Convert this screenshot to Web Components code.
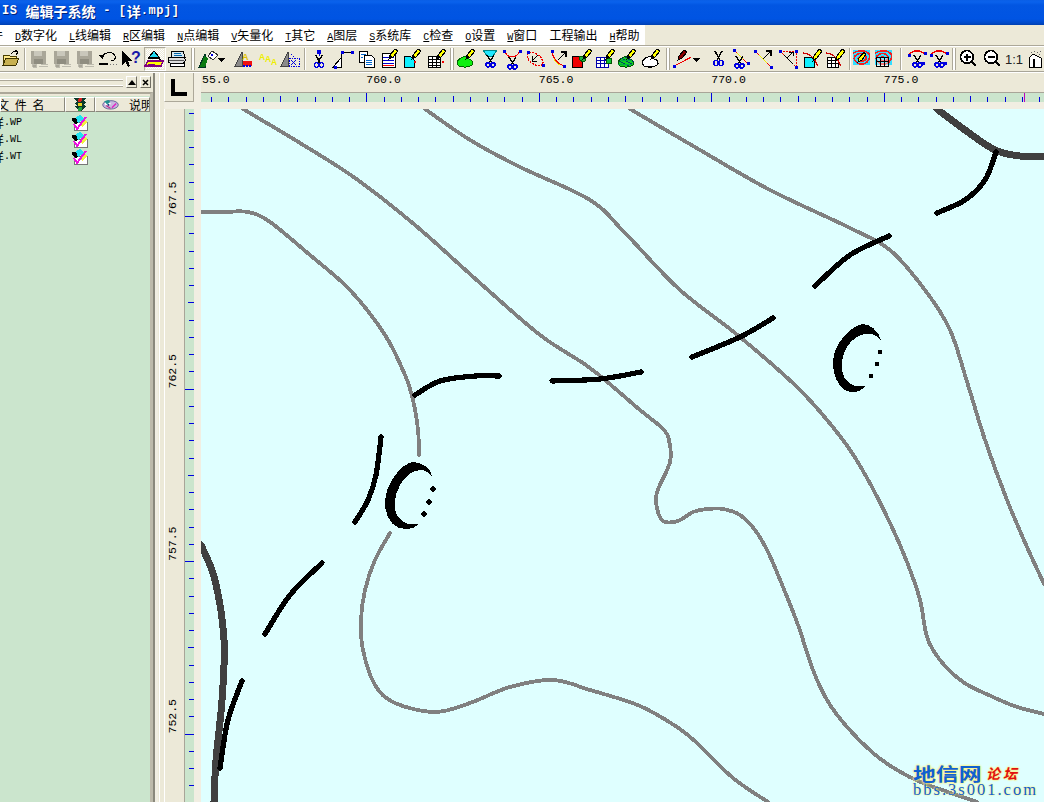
<!DOCTYPE html>
<html lang="zh"><head><meta charset="utf-8"><title>MAPGIS</title>
<style>
html,body{margin:0;padding:0;width:1044px;height:802px;overflow:hidden;background:#ece9d8}
body{display:flex;flex-direction:column;font-family:"Noto Sans CJK SC","Liberation Sans",sans-serif}
#work{display:flex;flex:1;min-height:0}
</style></head><body>
<gis-titlebar>IS 编辑子系统 - [详.mpj]</gis-titlebar>
<gis-menubar></gis-menubar>
<gis-toolbar></gis-toolbar>
<div id="work">
  <gis-panel></gis-panel>
  <gis-splitter></gis-splitter>
  <gis-mapview></gis-mapview>
</div>
<script>
const CJK='"Noto Sans CJK SC",sans-serif', MONO='"Liberation Mono",monospace';
function def(name,css,html,init){
  customElements.define(name,class extends HTMLElement{
    constructor(){super();const r=this.attachShadow({mode:'open'});
      r.innerHTML='<style>'+css+'</style>'+(typeof html==='function'?html(this):html);}
    connectedCallback(){if(init)init(this.shadowRoot,this);}
  });
}
/* ---------- title bar ---------- */
def('gis-titlebar',`
:host{display:flex;align-items:center;flex:none;height:25px;box-sizing:border-box;padding:0 0 3px 2px;overflow:hidden;
 background:linear-gradient(#0a5fe6 0,#0a62ec 2px,#0256e2 5px,#0054e3 19px,#0049c8 23px,#003fb0 25px);color:#fff;
 font:bold 12px ${MONO};white-space:pre;text-shadow:1px 1px 0 #00207a}
.l{letter-spacing:.6px}
.c{font:bold 14px ${CJK}}`,
`<span class="l">IS </span><span class="c">编辑子系统</span><span class="l"> - [</span><span class="c">详</span><span class="l">.mpj]</span>`);
/* ---------- menu ---------- */
const menus=[['F','文件'],['D','数字化'],['L','线编辑'],['R','区编辑'],['N','点编辑'],['V','矢量化'],['T','其它'],['A','图层'],['S','系统库'],['C','检查'],['O','设置'],['W','窗口'],['','工程输出'],['H','帮助']];
def('gis-menubar',`
:host{display:flex;flex:none;height:20px;background:#ece9d8;border-bottom:1px solid #aca899;box-sizing:content-box;overflow:hidden}
.w{display:flex;width:645px;flex:none;background:#fff;height:20px;align-items:center;color:#000;overflow:hidden}
.i{flex:none;padding:0 6px;font:12px/20px ${CJK};white-space:nowrap}
.i u{font:10px ${MONO};text-decoration:underline}
.first{margin-left:-33px}`,
`<div class="w">`+menus.map((m,i)=>`<span class="i${i?'':' first'}">${m[0]?`<u>${m[0]}</u>`:''}${m[1]}</span>`).join('')+`</div>`);
/* ---------- icons ---------- */
const B='#0000e0',R='#f00000';
const sc=(x,y,c='#000')=>`<g transform="translate(${x} ${y})" fill="none"><path d="M2 0L7 8M9 0L4 8" stroke="${c}" stroke-width="1.4"/><circle cx="3" cy="10" r="2.2" stroke="${B}" stroke-width="1.3"/><circle cx="8" cy="10" r="2.2" stroke="${B}" stroke-width="1.3"/></g>`;
const pen=(x,y)=>`<g transform="translate(${x} ${y})"><path d="M0 10L1 6 6 0 9 2 4 8Z" fill="#ff0" stroke="#000"/><path d="M0 10L1 6 3 8Z" fill="#000"/></g>`;
const dot=(x,y,c=B,s=3)=>`<rect x="${x-s/2}" y="${y-s/2}" width="${s}" height="${s}" fill="${c}"/>`;
const gtri=`<path d="M8 3L8 17 1 17Z" fill="#8a8a8a" stroke="#444"/>`;
const save=`<path d="M3 2h15v13H3z" fill="#a9a698"/><rect x="6" y="2" width="8" height="5" fill="#c9c7bb"/><rect x="6" y="10" width="9" height="5" fill="#8f8d80"/><path d="M8 15h-4l1 3h3zM11 17h9M13 15h7" stroke="#bdbbae" stroke-width="1" fill="#a9a698"/>`;
const arrowTR=(x,y)=>`<path d="M${x} ${y+8}L${x+8} ${y}M${x+3} ${y}h5v5" fill="none" stroke="#000" stroke-width="1.3"/>`;
const contour=`<rect x="1" y="1" width="17" height="15" fill="#3df" /><path d="M1 4C6 1 14 1 17 5 19 11 14 16 8 15 3 14 1 10 3 7 6 3 13 4 14 8 15 12 10 13 7 11 5 9 7 7 10 8" fill="none" stroke="#f02020" stroke-width="1.5"/>`;
const zoom=(p)=>`<circle cx="9" cy="8" r="6.4" fill="#fff" stroke="#000" stroke-width="1.6"/><path d="M13.5 12.5L18 17" stroke="#000" stroke-width="2.6"/><path d="M5.5 8h7${p?'M9 4.5v7':''}" stroke="#000" stroke-width="1.8"/>`;
const icons={
 folder:`<path d="M3 16V6h6l1 1h6v3" fill="#ffe98a" stroke="#4b4000"/><path d="M3 16L6 9H19L16 16Z" fill="#c7b050" stroke="#3c3300"/><path d="M11 5C12 3 15 2 17 3M15 1l3 2-2 3" fill="none" stroke="#000"/>`,
 save,
 undo:`<path d="M5 8C7 3 16 2 18 7 19 10 17 12 14 12" fill="none" stroke="#000"/><path d="M2 6l5 0-1 5z" fill="#000"/><path d="M2 15h9" stroke="#000" stroke-width="2"/><path d="M13 15h1M16 15h1M19 15h1" stroke="#777"/>`,
 help:`<path d="M1 2V16L4.500 12.500 7 18 9 17 7 11.500H11Z" fill="#000"/><text x="10" y="14" font-family="Liberation Sans" font-weight="bold" font-size="16" fill="#1818a8">?</text>`,
 map:`<path d="M10 2L15 8H5Z" fill="#20d8f0" stroke="#000"/><path d="M4 9h11l2 3" fill="#fff" stroke="#000"/><path d="M4 12H19L17 17H1Z" fill="#ff0" stroke="#800080" stroke-width="1.5"/><path d="M4 15h7" stroke="#800080"/>`,
 print:`<path d="M6 2H17L19 8H5Z" fill="#d8e8f0" stroke="#000"/><path d="M8 4h7M8 6h8" stroke="#06a" /><rect x="2" y="8" width="17" height="6" rx="2" fill="#ddd" stroke="#000"/><path d="M3 11h15" stroke="#555"/><rect x="4" y="14" width="14" height="3" fill="#fff" stroke="#000"/>`,
 pt:`<path d="M7 5L7 18 1 18Z" fill="#0a7a10" stroke="#032"/><path d="M8 7L4 15 7 18 10 10Z" fill="#0a7a10"/><path d="M14 2L20 6 15 11 10 7Z" fill="#fff" stroke="#333"/>${dot(14,6,B,2)}`,
 down:`<path d="M2 9h7l-3.500 4z" fill="#000"/>`,
 pta:gtri+`<text x="8" y="11" font-family="Liberation Sans" font-weight="bold" font-size="9" fill="#e0c000">A</text><rect x="9" y="12" width="9" height="5" fill="#f01010"/><path d="M9 17h9" stroke="${B}" stroke-width="2" stroke-dasharray="2 1"/>`,
 aaa:`<text x="1" y="11" font-family="Liberation Sans" font-weight="bold" font-size="8.500" fill="#eeee00">A</text><text x="7" y="13" font-family="Liberation Sans" font-weight="bold" font-size="8.500" fill="#eeee00">A</text><text x="13" y="16" font-family="Liberation Sans" font-weight="bold" font-size="8.500" fill="#eeee00">A</text>`,
 ptb:gtri+`<path d="M11 5l3 3M9 9h10v8H9z" fill="none" stroke="${B}" stroke-dasharray="1.500 1"/><path d="M11 11l5 5M16 11l-5 5" stroke="${B}"/>`,
 cut1:dot(11,3,B,3.500)+`<path d="M11 4v3" stroke="${B}"/>`+sc(5.500,6),
 line:`<path d="M9 18L9 9 1 18Z" fill="#fff" stroke="#000"/><path d="M9 9L10 3H20" fill="none" stroke="#000"/>${dot(10,3)}${dot(20,3)}${dot(3,18)}`,
 doc2:`<path d="M3 2h8v11H3z" fill="#fff" stroke="#000"/><path d="M8 6h7l3 3v9H8z" fill="#fff" stroke="#000"/><path d="M5 5h5M5 8h2M10 11h6M10 13h6M10 15h6" stroke="#06c"/>`,
 lines:`<path d="M3 4h13v14H3z" fill="#fff" stroke="#000"/><path d="M4 8h11M4 11h11M4 14h11" stroke="#00c"/><path d="M4 16h11" stroke="#f00"/>`+pen(10,0),
 docpen:`<path d="M3 7h6l4 4v7H3z" fill="#10f0ff" stroke="#000"/>`+pen(11,0)+dot(14,13,R,2),
 tbl:`<path d="M3 7h12v11H3z" fill="#fff" stroke="#000"/><path d="M3 10h12M3 13h12M3 16h12M7 7v11M11 7v11" stroke="#000"/>`+pen(12,0)+dot(18,13,R,2),
 blobg:`<path d="M3 17C-1 13 3 9 7 8 10 6 13 8 13 10 17 11 18 14 16 16 12 19 6 18 3 17Z" fill="#10f010" stroke="#060"/>`+pen(10,0),
 cutc:`<path d="M3 1H17L13 7H7Z" fill="#20e8ff" stroke="#088"/>`+sc(5,6),
 cutr:`<path d="M2 2C5 7 8 8 10 8 13 8 16 6 18 2" fill="none" stroke="${R}"/>${dot(2,2)}${dot(18,2)}`+sc(5,8),
 ell:`<ellipse cx="9" cy="10" rx="9" ry="5" transform="rotate(35 9 10)" fill="none" stroke="${R}" stroke-dasharray="2 1" stroke-width="1.300"/>${dot(2,3)}${dot(17,16)}<path d="M12 6L6 12M6 7v5h5" fill="none" stroke="#000"/>`,
 crv:`<path d="M3 2C4 10 9 15 15 17" fill="none" stroke="${R}" stroke-width="1.200"/><path d="M5 10C6 13 9 15 11 16" stroke="#ee0" fill="none"/>${dot(3,2)}${dot(15,17)}`+arrowTR(9,3),
 rg:`<rect x="1" y="7" width="10" height="11" fill="#f00000" stroke="#000"/><path d="M8 8C11 6 15 8 15 11 13 14 9 13 8 8Z" fill="#20b040" stroke="#050"/>`+pen(12,0),
 grid:`<path d="M2 8h12v10H2z" fill="#fff" stroke="#00a"/><path d="M2 11h12M2 14h12M6 8v10M10 8v10" stroke="#00a"/><circle cx="15" cy="12" r="3" fill="#10c030" stroke="#050"/>`+pen(12,0),
 hatch:`<path d="M3 17C-1 13 3 9 7 8 10 6 13 8 13 10 17 11 18 14 16 16 12 19 6 18 3 17Z" fill="#10d020" stroke="#050"/><path d="M2 12L12 17M4 9L15 15M8 8L17 13" stroke="#046" /><path d="M1 15h14M4 11h11" stroke="#0a4"/>`+pen(10,0),
 bloww:`<path d="M3 17C-1 13 3 9 7 8 10 6 13 8 13 10 17 11 18 14 16 16 12 19 6 18 3 17Z" fill="#fff" stroke="#000" stroke-width="1.200"/>`+pen(10,0),
 redpen:`<path d="M1 17C5 15 10 13 18 8" fill="none" stroke="${R}" stroke-width="1.200"/>${dot(1,17)}`+`<g transform="translate(5 1)"><path d="M0 10L1 6 6 0 9 2 4 8Z" fill="#800" stroke="#000"/></g>`,
 cut:sc(5,1,'#000').replace('translate(5 1)','translate(5 2) scale(1 1.200)'),
 cuty:`<path d="M3 1L16 14" stroke="${R}"/><path d="M6 4l6 6" stroke="#ee0"/>${dot(3,1)}${dot(17,14)}`+sc(3,7),
 diag:`<path d="M1 2L17 18" stroke="${R}"/><path d="M5 6l8 8" stroke="#ee0"/>${dot(1,2)}${dot(17,18)}`+arrowTR(9,2),
 tri:`<path d="M1 2H17V18Z" fill="none" stroke="${R}" stroke-dasharray="2 1"/>${dot(1,2)}${dot(17,2)}${dot(17,18)}<path d="M5 6L14 15" stroke="#000"/><path d="M8 9L14 3M10 3h4v4" fill="none" stroke="#000"/>`,
 dcr:`<path d="M2 8h7l3 3v7H2z" fill="#10f0ff" stroke="#000"/><path d="M1 4C6 4 12 8 16 17" fill="none" stroke="#c00" stroke-width="1.200"/>`+`<g transform="translate(11 0)"><path d="M0 12L1 7 6 0 9 2 4 9Z" fill="#ff0" stroke="#000"/></g>`,
 tcr:`<path d="M2 8h11v10H2z" fill="#fff" stroke="#000"/><path d="M2 11h11M2 14h11M6 8v10M10 8v10" stroke="#000"/><path d="M1 4C6 4 12 8 16 17" fill="none" stroke="#c00" stroke-width="1.200"/>`+`<g transform="translate(11 0)"><path d="M0 12L1 7 6 0 9 2 4 9Z" fill="#ff0" stroke="#000"/></g>`,
 ctp:contour+`<g transform="translate(6 3)"><path d="M0 10L1 6 6 0 8 2 4 8Z" fill="#ff0" stroke="#000"/></g><circle cx="12" cy="4" r="1.500" fill="#000"/>`,
 ctg:contour+`<path d="M2 8h12v9H2z" fill="#fff" fill-opacity=".4" stroke="#000"/><path d="M2 12h12M6 8v9M10 8v9" stroke="#000"/>`,
 cutd:`<path d="M3 5L8 2H14L19 5" fill="none" stroke="${R}" stroke-width="1.200"/>${dot(3,6)}${dot(19,4)}`+sc(6,6)+dot(17,14),
 zin:zoom(1),zout:zoom(0),
 one:`<text x="0" y="15" font-family="Liberation Sans" font-size="13" fill="#222">1:1</text>`,
 bld:`<path d="M6 5L2 9V18H14V9Z" fill="#fff" stroke="#000"/><path d="M7 18V10" stroke="#000" stroke-width="2"/><path d="M4 3h1M7 2h1M10 3h1M13 2h1M12 5h1" stroke="#666" stroke-width="1"/>`
};
const tb=[['folder',22],['|',6],['save',22],['save',23],['save',23],['undo',24],['help',24],['map',22,1],['print',22],['||',10],['pt',22],['down',14],['pta',22],['-',2],['aaa',22],['ptb',22],['|',6],['cut1',22],['-',2],['line',22],['-',2],['doc2',22],['-',1],['lines',22],['docpen',22],['-',2],['tbl',22],['||',9],['blobg',22],['-',2],['cutc',22],['cutr',22],['-',2],['ell',22],['-',1],['crv',22],['rg',22],['-',1],['grid',22],['-',1],['hatch',22],['-',2],['bloww',22],['||',10],['redpen',22],['down',13],['cut',22],['-',1],['cuty',22],['-',1],['diag',22],['-',3],['tri',22],['-',1],['dcr',22],['-',1],['tcr',22],['|',5],['ctp',22],['ctg',22],['|',10],['cutd',22],['cutd',22],['||',8],['zin',22],['-',2],['zout',22],['-',1],['one',22],['bld',22]];
def('gis-tb-item',`
:host{display:flex;flex:none;align-items:center;justify-content:center;height:24px;box-sizing:border-box;overflow:visible}
:host([pressed]){background:repeating-conic-gradient(#fff 0 25%,#ece9d8 0 50%) 0 0/2px 2px;border:1px solid;border-color:#aca899 #fff #fff #aca899;box-shadow:inset 0 0 0 1px #ece9d8}
svg{width:22px;height:20px;flex:none;overflow:visible}
.s{width:0;height:22px;border-left:1px solid #aca899;border-right:1px solid #fff}
.d{width:2px;height:22px;border-left:1px solid #aca899;border-right:1px solid #aca899;background:#fff}`,'');
def('gis-toolbar',`
:host{display:flex;flex:none;height:24px;background:#ece9d8;overflow:hidden;align-items:center;border-top:1px solid #fff;border-bottom:1px solid #a8a598;box-shadow:0 1px 0 #fff;position:relative;box-sizing:content-box}`,
'',(r)=>{
 tb.forEach(([k,w,p])=>{
  const el=document.createElement('gis-tb-item');el.style.width=w+'px';
  if(p)el.setAttribute('pressed','');
  const s=el.shadowRoot;
  if(k==='|')s.innerHTML+='<div class="s"></div>';
  else if(k==='||')s.innerHTML+='<div class="d"></div>';
  else if(k!=='-')s.innerHTML+=`<svg viewBox="0 0 22 20" shape-rendering="${/one|aaa/.test(k)?'auto':'crispEdges'}">${icons[k]}</svg>`;
  r.appendChild(el);
 });
});
/* ---------- left panel ---------- */
const light=`<svg width="18" height="15" viewBox="0 0 18 15" shape-rendering="crispEdges"><path d="M3 1h12l-3 3 3 1-3 3 3 1-3 3-3 3-3-3-3-3 0 0 3 0-3-3 3-1z" fill="#0b3a2a"/><circle cx="9" cy="3" r="2" fill="#d02020"/><circle cx="9" cy="7.500" r="2" fill="#e8d020"/><circle cx="9" cy="12" r="2" fill="#20a040"/></svg>`;
const disc=`<svg width="17" height="13" viewBox="0 0 24 15" style="flex:none"><ellipse cx="12" cy="8" rx="11" ry="6" fill="#c8b8e0" stroke="#404080"/><ellipse cx="8" cy="6" rx="4" ry="3" fill="#fff"/><path d="M3 3L9 1 12 4 7 7Z" fill="#209090"/><path d="M14 12l6-6" stroke="#e020c0" stroke-width="2"/><path d="M6 9l6 4" stroke="#c02080" stroke-width="1.500"/><circle cx="9" cy="8" r="1.500" fill="#204080"/></svg>`;
const chk=`<svg width="16" height="16" viewBox="0 0 16 16" shape-rendering="crispEdges"><rect x="2" y="7" width="13" height="8.500" fill="#fff" stroke="#777"/><path d="M0 3h5l3 3-4 3-4-3z" fill="#000"/><path d="M4 2L8 0l4 4-6 4z" fill="#20e0f0"/><path d="M7 9l5-5 3 3-5 5z" fill="#f0f040"/><path d="M2 9l3 5 9-12" fill="none" stroke="#f010e0" stroke-width="2"/><path d="M5 16h9" stroke="#111" stroke-width="1"/></svg>`;
def('gis-panel',`
:host{display:flex;flex-direction:column;flex:none;width:153px;background:#ece9d8;overflow:hidden;font:12px ${CJK};color:#000}
.grip{display:flex;align-items:center;height:20px;flex:none;gap:3px;padding-right:2px;box-sizing:border-box}
.lines{flex:1;height:5px;border:solid #fff;border-width:1px 0;box-shadow:0 1px 0 #aca899,inset 0 1px 0 #aca899;background:#ece9d8}
.b{width:11px;height:12px;box-sizing:border-box;border:1px solid;border-color:#fff #716f64 #716f64 #fff;display:flex;align-items:center;justify-content:center;background:#ece9d8;flex:none}
.list{flex:1;display:flex;flex-direction:column;min-height:0;border-right:3px solid #bdbaab;border-top:2px solid #aca899;padding-top:3px;background:linear-gradient(#ece9d8 0 2px,#cbe5cd 2px)}
.hd{display:flex;height:15px;flex:none;background:#ece9d8;overflow:hidden}
.hd>div{box-sizing:border-box;border:1px solid;border-color:#fff #8a887c #8a887c #fff;display:flex;align-items:center;justify-content:center;height:15px;line-height:13px;white-space:pre;overflow:hidden;flex:none}
.r{display:flex;height:17px;align-items:center;flex:none;font:10px ${MONO};white-space:nowrap;position:relative}
.t{width:80px;flex:none;margin-left:-8px;display:flex;align-items:center}.t b{font:12px ${CJK};display:inline-block;width:12px}
.rows{padding-top:2px;background:#cbe5cd;flex:1;overflow:hidden}`,
`<div class="grip"><div class="lines"></div>
 <div class="b"><svg width="8" height="5" viewBox="0 0 8 5"><path d="M4 0L8 5H0z" fill="#000"/></svg></div>
 <div class="b"><svg width="7" height="7" viewBox="0 0 7 7"><path d="M1 1l5 5M6 1l-5 5" stroke="#000" stroke-width="1.500"/></svg></div></div>
<div class="list"><div class="hd">
 <div style="width:65px;justify-content:flex-start"><span style="margin-left:-4px;letter-spacing:1.500px">文 件 名</span></div>
 <div style="width:30px">${light}</div>
 <div style="width:55px;justify-content:flex-start;padding-left:6px;gap:10px">${disc}<span style="flex:none">说明</span></div></div>
 <div class="rows">${['WP','WL','WT'].map(x=>`<div class="r"><div class="t"><b>详</b>.${x}</div>${chk}</div>`).join('')}</div></div>`);
def('gis-splitter',`:host{display:block;flex:none;width:11px;background:linear-gradient(90deg,#8a887c 0 2px,#f1eee2 2px 5.500px,#ece9d8 5.500px 6px,#fff 6px 7px,#ece9d8 7px 11px)}`,'');
/* ---------- rulers ---------- */
const P=17.25;
def('gis-corner',`:host{display:block;background:#f1eee2;width:37px;height:37px;flex:none}
.b{width:30px;height:30px;box-sizing:border-box;background:#ece9d8;border:1px solid;border-color:#fff #aca899 #aca899 #fff;display:flex;align-items:center;justify-content:center}`,
`<div class="b"><svg width="16" height="17" viewBox="0 0 16 17"><path d="M0 0h4v13h12v4H0z" fill="#000"/></svg></div>`);
function rulerSvg(){
 const W=843,H=37,ox=201;let s='';
 s+=`<rect width="${W}" height="20" fill="#ece9d8"/><rect y="20" width="${W}" height="1" fill="#a8a598"/><rect y="21" width="${W}" height="9" fill="#cbe5cd"/><rect y="30" width="${W}" height="7" fill="#f1eee2"/>`;
 for(let k=-10;k<60;k++){const x=Math.round(366.3+k*P-ox);if(x<0||x>W)continue;const m=((k%10)+10)%10===0,n=((k%5)+5)%5===0;
  s+=`<rect x="${x}" y="${m?21:n?24:25}" width="1" height="${m?9:n?6:5}" fill="#0000e0"/>`;}
 s+=`<rect x="${1024-ox}" y="21" width="1" height="9" fill="#c000c0"/>`;
 [['55.0',202],['760.0',366.3],['765.0',538.8],['770.0',711.3],['775.0',883.8]].forEach(([t,x])=>{s+=`<text x="${x-ox}" y="11" font-family="Liberation Mono" font-size="11.500" fill="#000">${t}</text>`;});
 return `<svg width="${W}" height="${H}" viewBox="0 0 ${W} ${H}" shape-rendering="crispEdges" style="display:block">${s}</svg>`;
}
function vrulerSvg(){
 const W=37,H=693,oy=109;let s='';
 s+=`<rect width="20" height="${H}" fill="#ece9d8"/><rect width="1" height="${H}" fill="#fff"/><rect x="20" width="1" height="${H}" fill="#a8a598"/><rect x="21" width="9" height="${H}" fill="#cbe5cd"/><rect x="30" width="7" height="${H}" fill="#f1eee2"/>`;
 for(let k=-10;k<60;k++){const y=Math.round(216+k*P-oy);if(y<0||y>H)continue;const m=((k%10)+10)%10===0,n=((k%5)+5)%5===0;
  s+=`<rect x="${m?21:n?24:25}" y="${y}" width="${m?9:n?6:5}" height="1" fill="#0000e0"/>`;}
 [['767.5',216],['762.5',388.5],['757.5',561],['752.5',733.5]].forEach(([t,y])=>{s+=`<text transform="translate(12 ${y-oy}) rotate(-90)" font-family="Liberation Mono" font-size="11.500" fill="#000">${t}</text>`;});
 return `<svg width="${W}" height="${H}" viewBox="0 0 ${W} ${H}" shape-rendering="crispEdges" style="display:block">${s}</svg>`;
}
def('gis-hruler',`:host{display:block;flex:1;overflow:hidden;height:37px}`,rulerSvg());
def('gis-vruler',`:host{display:block;flex:none;width:37px;overflow:hidden}`,vrulerSvg());
/* ---------- map ---------- */
function sm(pts){let d=`M${pts[0][0]} ${pts[0][1]}`;
 for(let i=0;i<pts.length-1;i++){const p0=pts[i-1]||pts[i],p1=pts[i],p2=pts[i+1],p3=pts[i+2]||p2;
  d+=`C${(p1[0]+(p2[0]-p0[0])/6).toFixed(1)} ${(p1[1]+(p2[1]-p0[1])/6).toFixed(1)} ${(p2[0]-(p3[0]-p1[0])/6).toFixed(1)} ${(p2[1]-(p3[1]-p1[1])/6).toFixed(1)} ${p2[0]} ${p2[1]}`;}
 return d;}
const gray=[
 [[243,109],[300,143],[355,178],[415,225],[480,283],[540,335],[590,368],[640,410],[662,428],[669,440],[670,462],[657,492],[657,508],[663,521],[678,521],[693,512],[708,509],[723,509],[740,515],[755,530],[768,552],[783,587],[798,625],[813,670],[827,700],[847,727],[873,753],[897,770],[923,783],[977,802]],
 [[201,212],[225,212],[248,212],[270,222],[310,255],[350,290],[385,335],[405,375],[413,400],[418,430],[419,455]],
 [[390,533],[375,560],[365,590],[361,620],[363,650],[375,685],[395,703],[435,712],[470,703],[510,687],[553,680],[590,690],[640,706],[677,727],[697,743],[733,778],[768,802]],
 [[425,109],[470,140],[520,167],[590,200],[625,233],[680,290],[740,337],[800,390],[843,440],[867,478],[890,523],[907,562],[920,600],[927,637],[940,660],[963,682],[993,697],[1017,707],[1044,714]],
 [[630,109],[700,150],[770,190],[850,228],[890,250],[925,290],[950,330],[968,385],[985,440],[1007,500],[1027,547],[1044,584]]
];
const dark=[[[937,109],[965,130],[995,150],[1020,156],[1044,156]],[[201,545],[215,580],[224,640],[222,700],[216,760],[214,802]]];
const blk=[[[937,213],[965,200],[985,180],[996,152]],[[815,286],[850,255],[889,236]],[[692,357],[740,337],[773,318]],[[552,381],[600,379],[641,372]],[[415,395],[440,381],[475,376],[499,376]],[[381,437],[376,475],[368,500],[355,522]],[[322,563],[290,595],[265,634]],[[242,681],[228,720],[220,768]]];
const mapSvg=`<svg width="843" height="693" viewBox="201 109 843 693" shape-rendering="crispEdges" style="display:block" fill="none" stroke-linecap="round" stroke-linejoin="round">
${gray.map(p=>`<path d="${sm(p)}" stroke="#808080" stroke-width="3.800"/>`).join('')}
${dark.map(p=>`<path d="${sm(p)}" stroke="#404040" stroke-width="7"/>`).join('')}
${blk.map(p=>`<path d="${sm(p)}" stroke="#000" stroke-width="5.200"/>`).join('')}
<path d="M433 478C430 466 420 462 413 462 400 464 385 485 385 503 385 520 395 529 405 529 412 529 416 527 418 524 408 526 401 522 397 515 393 507 394 496 400 485 406 473 423 462 433 478Z" fill="#000"/>
<path d="M882 342C878 330 870 324 863 324 850 326 833 345 833 362 833 380 842 392 852 392 858 392 862 390 865 386 855 388 848 384 844 377 840 369 841 357 847 347 853 336 872 326 882 342Z" fill="#000"/>
<g fill="#000"><circle cx="433" cy="489" r="2.600"/><circle cx="429" cy="502" r="2.600"/><circle cx="424" cy="514" r="2.600"/><circle cx="880" cy="352" r="2.400"/><circle cx="877" cy="364" r="2.400"/><circle cx="871" cy="376" r="2.400"/></g></svg>`;
def('gis-watermark',`
:host{position:absolute;right:5px;bottom:5px;width:126px;height:33px;display:block;color:#1060d0;pointer-events:none;white-space:nowrap}
.a{font:bold 18px/18px ${CJK};height:18px;text-shadow:0 0 2px #fff080,0 0 2px #fff080,0 0 2px #fff080;display:flex;align-items:center;overflow:visible}
.n{display:inline-block;width:54px;margin-right:19px;flex:none;transform:scaleX(1.270);transform-origin:0 50%}
.a i{font:italic bold 14px/18px ${CJK};color:#e01010;letter-spacing:3px}
.b{font:16.500px/15px "Liberation Serif",serif;letter-spacing:2px;text-shadow:0 0 2px #fff080,0 0 2px #fff080}`,
`<div class="a"><span class="n">地信网</span><i>论坛</i></div><div class="b">bbs.3s001.com</div>`);
def('gis-canvas',`:host{display:block;flex:1;background:#dfffff;position:relative;overflow:hidden}`,mapSvg+`<slot></slot>`);
def('gis-mapview',`
:host{display:flex;flex-direction:column;flex:1;min-width:0;overflow:hidden}
.top,.bot{display:flex}.bot{flex:1;min-height:0}`,
`<div class="top"><gis-corner></gis-corner><gis-hruler></gis-hruler></div>
<div class="bot"><gis-vruler></gis-vruler><gis-canvas><gis-watermark></gis-watermark></gis-canvas></div>`);
</script>
</body></html>
